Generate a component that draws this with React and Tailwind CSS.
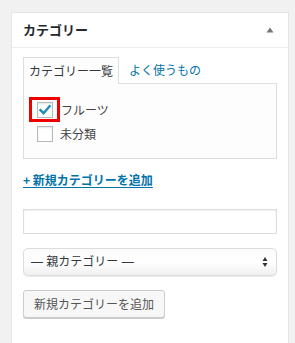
export default function App() {
  const font = { fontFamily: '"Noto Sans CJK JP", "Noto Sans", sans-serif' };
  return (
    <div className="min-h-[343px] bg-[#f1f1f1] pl-[11px] pr-[6px] pt-[12px] text-[#23282d]" style={font}>
      <div className="h-[340px] border border-[#e5e5e5] bg-white">
        {/* header */}
        <div className="flex h-[35px] items-center justify-between border-b border-[#eeeeee] pl-[11px] pr-[14px]">
          <h2 className="text-[13px] font-bold text-[#23282d]">カテゴリー</h2>
          <svg width="8" height="6" viewBox="0 0 8 6">
            <path d="M4 0.5 L7.5 5.5 L0.5 5.5 Z" fill="#72777c" />
          </svg>
        </div>

        <div className="px-[11px] pt-[9px]">
          {/* tabs */}
          <div className="flex items-end">
            <div className="relative z-10 -mb-px flex h-[27px] items-center border border-b-0 border-[#dddddd] bg-[#fdfdfd] px-[5px] text-[12px] text-[#32373c]">
              カテゴリー一覧
            </div>
            <div className="flex h-[26px] items-center px-[10px] text-[12px] text-[#0073aa]">
              よく使うもの
            </div>
          </div>
          <div className="h-[76px] border border-[#dddddd] bg-[#fdfdfd] pl-[5px] pt-[13px]">
            <div className="flex flex-col gap-[3px]">
              <div className="flex items-center">
                <div className="flex h-[25px] w-[31px] items-center justify-center border-[3px] border-[#ee0000]">
                  <span className="flex h-[16px] w-[16px] items-center justify-center border border-[#b4b9be] bg-white shadow-[inset_0_1px_2px_rgba(0,0,0,0.1)]">
                    <svg width="14" height="14" viewBox="0 0 14 14">
                      <path d="M2.5 7.2 L5.6 10.2 L11.6 3.2" fill="none" stroke="#1e8cbe" strokeWidth="2.4" strokeLinecap="square" />
                    </svg>
                  </span>
                </div>
                <span className="ml-px text-[12px] text-[#444]">フルーツ</span>
              </div>
              <div className="flex items-center pl-[8px]">
                <span className="h-[16px] w-[16px] border border-[#b4b9be] bg-white shadow-[inset_0_1px_2px_rgba(0,0,0,0.1)]" />
                <span className="ml-[7px] text-[12px] text-[#444]">未分類</span>
              </div>
            </div>
          </div>

          {/* add link */}
          <a className="mt-[12px] block text-[12px] font-bold text-[#0073aa] underline underline-offset-2">
            + 新規カテゴリーを追加
          </a>

          <div className="mt-[20px] h-[25px] border border-[#dddddd] bg-white shadow-[inset_0_1px_2px_rgba(0,0,0,0.07)]" />

          <div className="mt-[14px] flex h-[28px] items-center justify-between rounded-[5px] border border-[#dddddd] bg-gradient-to-b from-[#fbfbfb] via-white to-[#f0f0f0] pl-[7px] pr-[8px] text-[12px] text-[#32373c] shadow-[0_1px_1px_rgba(0,0,0,0.08)]">
            <span className="font-['Liberation_Sans','Noto_Sans_CJK_JP',sans-serif]">— 親カテゴリー —</span>
            <svg width="6" height="12" viewBox="0 0 6 12">
              <path d="M3 1 L5.5 5 L0.5 5 Z M3 11 L5.5 7 L0.5 7 Z" fill="#333" />
            </svg>
          </div>

          <button className="mt-[14px] flex h-[28px] items-center rounded-[3px] border border-[#cccccc] bg-[#f7f7f7] px-[10px] text-[12px] text-[#555] shadow-[0_1px_0_#cccccc]">
            新規カテゴリーを追加
          </button>
        </div>
      </div>
    </div>
  );
}
